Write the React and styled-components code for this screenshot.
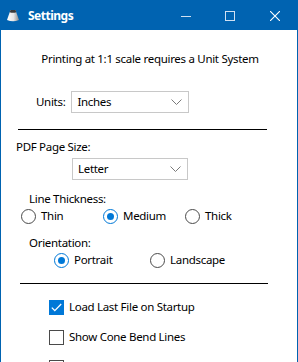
import React, { useState } from "react";
import styled, { createGlobalStyle } from "styled-components";

const GlobalStyle = createGlobalStyle`
	html, body {
		margin: 0;
		padding: 0;
		background: #ffffff;
	}
	body {
		font-family: "Noto Sans", "Open Sans", sans-serif;
		font-size: 12px;
		color: #000000;
	}
`;

const BLUE = "#0063b1";
const ACCENT = "#0078d7";

const ConeIcon = () => (
	<svg width="14" height="13" viewBox="0 0 14 13">
		<defs>
			<linearGradient id="cone" x1="0" x2="1" y1="0" y2="0">
				<stop offset="0" stopColor="#ffffff" />
				<stop offset="0.55" stopColor="#e6e6e6" />
				<stop offset="1" stopColor="#8a8a8a" />
			</linearGradient>
		</defs>
		<path d="M4.5 1 L9.5 1 L13 11 Q7 13.5 1 11 Z" fill="url(#cone)" />
		<path d="M4.5 1 L9.5 1 L10.3 3.3 Q7 4.4 3.7 3.3 Z" fill="#3a3a3a" />
	</svg>
);

const Chevron = () => (
	<svg width="11" height="6" viewBox="0 0 11 6">
		<path d="M0.5 0.5 L5.5 5.5 L10.5 0.5" fill="none" stroke="#7a7a7a" strokeWidth="1" />
	</svg>
);

const Check = () => (
	<svg width="11" height="9" viewBox="0 0 11 9">
		<path d="M0.8 4.6 L3.8 7.6 L10.2 1" fill="none" stroke="#ffffff" strokeWidth="1.3" />
	</svg>
);

const Select = ({ value, width }) => (
	<Combo $width={width}>
		<span>{value}</span>
		<Chevron />
	</Combo>
);

const Radio = ({ label, checked, onSelect, left }) => (
	<RadioItem $left={left} onClick={onSelect}>
		<RadioCircle $checked={checked}>{checked && <Dot />}</RadioCircle>
		<span>{label}</span>
	</RadioItem>
);

const CheckItem = ({ label, checked, onToggle, gap }) => (
	<CheckRow $gap={gap} onClick={onToggle}>
		<Box $checked={checked}>{checked && <Check />}</Box>
		<span>{label}</span>
	</CheckRow>
);

export default function App() {
	const [thickness, setThickness] = useState("Medium");
	const [orientation, setOrientation] = useState("Portrait");
	const [loadLast, setLoadLast] = useState(true);
	const [bendLines, setBendLines] = useState(false);
	const [seamLines, setSeamLines] = useState(false);

	return (
		<>
			<GlobalStyle />
			<Window>
				<TitleBar>
					<TitleLeft>
						<ConeIcon />
						<Title>Settings</Title>
					</TitleLeft>
					<Controls>
						<CtrlButton $width={44}>
							<svg width="10" height="10" viewBox="0 0 10 10">
								<path d="M0 5.5 H10" stroke="#cfe0f2" strokeWidth="1" />
							</svg>
						</CtrlButton>
						<CtrlButton $width={44}>
							<svg width="10" height="10" viewBox="0 0 10 10">
								<rect x="0.5" y="0.5" width="9" height="9" fill="none" stroke="#cfe0f2" strokeWidth="1" />
							</svg>
						</CtrlButton>
						<CtrlButton $width={46}>
							<svg width="10" height="10" viewBox="0 0 10 10">
								<path d="M0 0 L10 10 M10 0 L0 10" stroke="#ffffff" strokeWidth="1.1" />
							</svg>
						</CtrlButton>
					</Controls>
				</TitleBar>

				<Content>
					<Heading>Printing at 1:1 scale requires a Unit System</Heading>

					<UnitsRow>
						<Label>Units:</Label>
						<Select value="Inches" width={118} />
					</UnitsRow>

					<Divider $left={18} $width={249} $top={16} />

					<SectionLabel $left={16} $top={9}>PDF Page Size:</SectionLabel>
					<ComboIndent>
						<Select value="Letter" width={116} />
					</ComboIndent>

					<SectionLabel $left={29} $top={11}>Line Thickness:</SectionLabel>
					<RadioRow>
						{["Thin", "Medium", "Thick"].map((t, i) => (
							<Radio
								key={t}
								label={t}
								left={[21, 103, 185][i]}
								checked={thickness === t}
								onSelect={() => setThickness(t)}
							/>
						))}
					</RadioRow>

					<SectionLabel $left={29} $top={11}>Orientation:</SectionLabel>
					<RadioRow>
						{["Portrait", "Landscape"].map((o, i) => (
							<Radio
								key={o}
								label={o}
								left={[54, 150][i]}
								checked={orientation === o}
								onSelect={() => setOrientation(o)}
							/>
						))}
					</RadioRow>

					<Divider $left={20} $width={248} $top={15} />

					<CheckItem
						label="Load Last File on Startup"
						checked={loadLast}
						onToggle={() => setLoadLast(!loadLast)}
						gap={15}
					/>
					<CheckItem
						label="Show Cone Bend Lines"
						checked={bendLines}
						onToggle={() => setBendLines(!bendLines)}
						gap={14}
					/>
					<CheckItem
						label="Show Cone Seam Lines"
						checked={seamLines}
						onToggle={() => setSeamLines(!seamLines)}
						gap={14}
					/>
				</Content>
			</Window>
		</>
	);
}

const Window = styled.div`
	width: 298px;
	height: 362px;
	box-sizing: border-box;
	border-left: 1px solid ${BLUE};
	border-right: 1px solid ${BLUE};
	overflow: hidden;
	background: #ffffff;
	display: flex;
	flex-direction: column;
`;

const TitleBar = styled.div`
	height: 30px;
	flex-shrink: 0;
	background: ${BLUE};
	margin: 0 -1px;
	display: flex;
	align-items: center;
	justify-content: space-between;
`;

const TitleLeft = styled.div`
	display: flex;
	align-items: center;
	gap: 8px;
	padding-left: 6px;
	padding-top: 1px;
`;

const Title = styled.span`
	color: #ffffff;
	font-weight: 700;
	font-size: 12px;
	letter-spacing: -0.5px;
`;

const Controls = styled.div`
	display: flex;
	height: 100%;
`;

const CtrlButton = styled.div`
	width: ${p => p.$width}px;
	height: 100%;
	display: flex;
	align-items: center;
	justify-content: center;
	padding-top: 1px;
	box-sizing: border-box;
`;

const Content = styled.div`
	display: flex;
	flex-direction: column;
	font-size: 11.5px;
	line-height: 16px;
	letter-spacing: -0.3px;
`;

const Heading = styled.div`
	margin-top: 21px;
	text-align: center;
	padding-left: 2px;
`;

const UnitsRow = styled.div`
	margin-top: 24px;
	display: flex;
	align-items: center;
	padding-left: 35px;
	gap: 6px;
`;

const Label = styled.span``;

const Combo = styled.div`
	width: ${p => p.$width}px;
	height: 22px;
	box-sizing: border-box;
	border: 1px solid #c8c8c8;
	background: #ffffff;
	display: flex;
	align-items: center;
	justify-content: space-between;
	padding: 0 6px 0 5px;
`;

const Divider = styled.div`
	margin-top: ${p => p.$top}px;
	margin-left: ${p => p.$left - 1}px;
	width: ${p => p.$width}px;
	height: 1px;
	background: #000000;
`;

const SectionLabel = styled.div`
	margin-top: ${p => p.$top}px;
	padding-left: ${p => p.$left - 1}px;
`;

const ComboIndent = styled.div`
	margin-top: 3px;
	padding-left: 71px;
`;

const RadioRow = styled.div`
	position: relative;
	height: 16px;
	margin-top: 1px;
`;

const RadioItem = styled.div`
	position: absolute;
	left: ${p => p.$left - 1}px;
	top: 0;
	display: flex;
	align-items: center;
	gap: 5px;
	cursor: pointer;
`;

const RadioCircle = styled.div`
	width: 15px;
	height: 15px;
	box-sizing: border-box;
	border-radius: 50%;
	border: 1px solid ${p => (p.$checked ? ACCENT : "#4a4a4a")};
	display: flex;
	align-items: center;
	justify-content: center;
	background: #ffffff;
`;

const Dot = styled.div`
	width: 7px;
	height: 7px;
	border-radius: 50%;
	background: ${ACCENT};
`;

const CheckRow = styled.div`
	margin-top: ${p => p.$gap}px;
	padding-left: 48px;
	display: flex;
	align-items: center;
	gap: 5px;
	cursor: pointer;
`;

const Box = styled.div`
	width: 15px;
	height: 15px;
	box-sizing: border-box;
	border: 1px solid ${p => (p.$checked ? ACCENT : "#4a4a4a")};
	background: ${p => (p.$checked ? ACCENT : "#ffffff")};
	display: flex;
	align-items: center;
	justify-content: center;
`;
